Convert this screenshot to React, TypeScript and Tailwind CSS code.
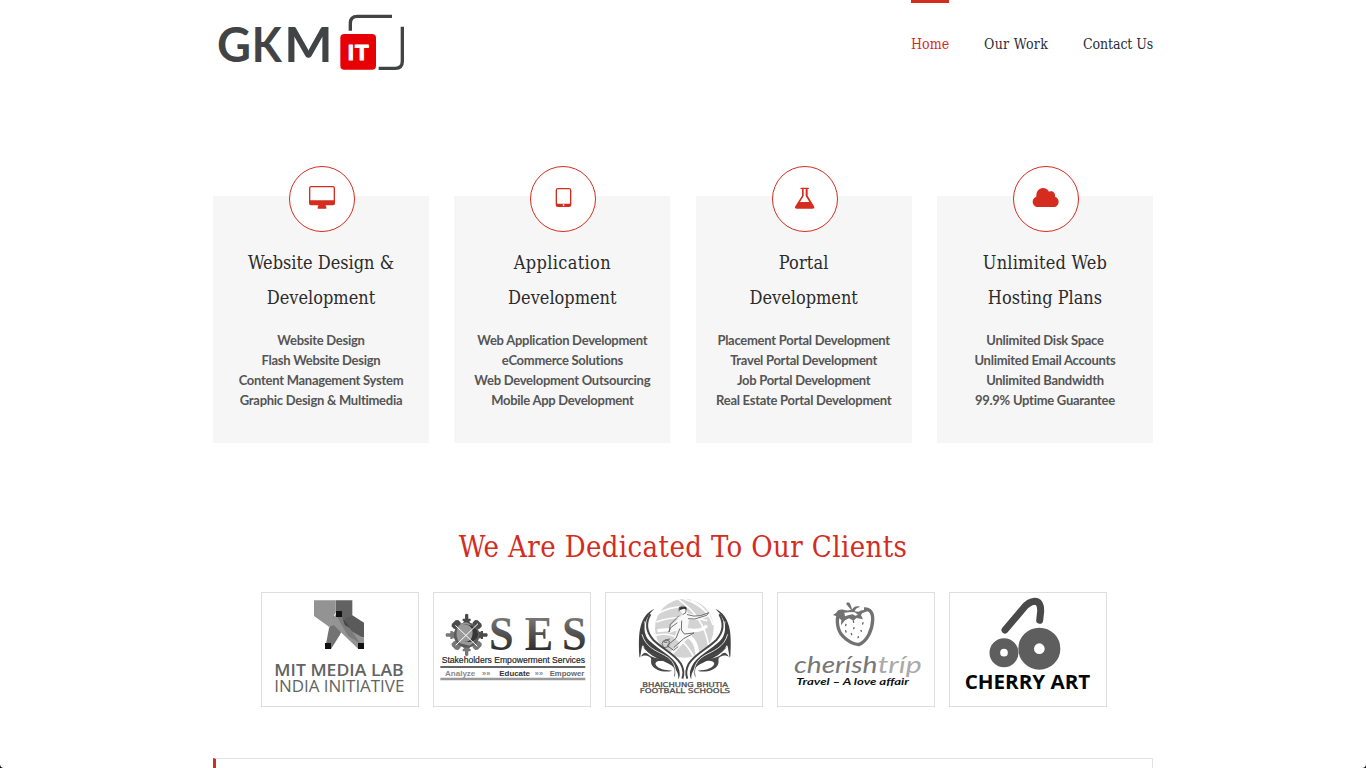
import React from 'react';

const slab = "font-['DejaVu_Serif_Condensed','DejaVu_Serif',serif] [font-stretch:condensed]";

type Service = { title: [string, string]; tracking: string; items: string[]; viewBox: string; icon: React.ReactNode };

const services: Service[] = [
  {
    title: ['Website Design &', 'Development'],
    tracking: 'tracking-[0px]',
    items: ['Website Design', 'Flash Website Design', 'Content Management System', 'Graphic Design & Multimedia'],
    viewBox: '255 36 192 192',
    icon: (
      <path
        fillRule="evenodd"
        d="M318 93h66q6 0 6 6v46q0 6-6 6h-22q0 3 2 5v5h-26v-5q2-2 2-5h-22q-6 0-6-6V99q0-6 6-6Zm0 4q-2 0-2 2v35q0 2 2 2h66q2 0 2-2V99q0-2-2-2Z"
      />
    ),
  },
  {
    title: ['Application', 'Development'],
    tracking: 'tracking-[0.35px]',
    items: ['Web Application Development', 'eCommerce Solutions', 'Web Development Outsourcing', 'Mobile App Development'],
    viewBox: '243 36 192 192',
    icon: (
      <path
        fillRule="evenodd"
        d="M324 99h33q7 0 7 7v43q0 7-7 7h-33q-7 0-7-7v-43q0-7 7-7Zm-1 4q-2 0-2 2v39q0 2 2 2h35q2 0 2-2v-39q0-2-2-2ZM340.500 148a2.500 2.500 0 1 0 .1 0Z"
      />
    ),
  },
  {
    title: ['Portal', 'Development'],
    tracking: 'tracking-[0.15px]',
    items: ['Placement Portal Development', 'Travel Portal Development', 'Job Portal Development', 'Real Estate Portal Development'],
    viewBox: '249 36 192 192',
    icon: (
      <path
        fillRule="evenodd"
        d="M333 98h22q2 0 2 2t-2 2h-2v20l19 32q4 7-5 7h-46q-9 0-5-7l20-32v-20h-3q-2 0-2-2t2-2Zm8 4v21l-11 18h28l-11-18v-21Z"
      />
    ),
  },
  {
    title: ['Unlimited Web', 'Hosting Plans'],
    tracking: 'tracking-[0.2px]',
    items: ['Unlimited Disk Space', 'Unlimited Email Accounts', 'Unlimited Bandwidth', '99.9% Uptime Guarantee'],
    viewBox: '252 36 192 192',
    icon: (
      <path d="M325 156c-10 0-17-7-17-16 0-7 4-13 11-15-1-15 7-26 20-26 8 0 14 4 18 11 9-4 20 2 18 15 7 2 11 8 11 15 0 9-7 16-15 16Z" />
    ),
  },
];

function Logo() {
  return (
    <svg className="block h-[90px] w-[220px]" viewBox="0 0 660 270">
      <g fill="#414344" fontFamily="Lato, sans-serif" fontWeight="700" fontSize="146">
        <text x="36" y="185" textLength="102" lengthAdjust="spacingAndGlyphs">G</text>
        <text x="140" y="185" textLength="90" lengthAdjust="spacingAndGlyphs">K</text>
        <text x="238" y="185" textLength="145" lengthAdjust="spacingAndGlyphs">M</text>
      </g>
      <g fill="none" stroke="#414344" strokeWidth="10">
        <path d="M436 92V70q0-21 21-21h104" />
        <path d="M592 80v104q0 21-21 21h-50" />
      </g>
      <rect x="406" y="102" width="107" height="107" rx="12" fill="#e60005" />
      <g fill="#fff" stroke="#fff" strokeWidth="3" strokeLinejoin="round" fontFamily="'Liberation Sans', sans-serif" fontWeight="700" fontSize="67">
        <text x="428" y="179">I</text>
        <text x="450" y="179">T</text>
      </g>
    </svg>
  );
}

function MitLogo() {
  return (
    <svg className="block h-full w-full" viewBox="21 24 468 339">
      <path d="M242 46h50v48l-18 14-32-22Z" fill="#626262" />
      <path d="m292 91 35 22v45l-38-8-26-45Z" fill="#5a5a5a" />
      <path d="m236 90 26 44-8 17-26 41h-18l12-62Z" fill="#737373" />
      <path d="M177 46h65v35l-20 44-45-32Z" fill="#939393" />
      <path d="m219 125 24-38 35 45 49 28v32h-17l-53-51-20-20Z" fill="#949494" />
      <path d="m243 90 18 6 36 52 20 28-38-24Z" fill="#7b7b7b" />
      <path d="m262 98 24 31-16-8Z" fill="#454545" />
      <path d="M243 78h18v18h-18ZM210 174h18v18h-18ZM309 174h18v18h-18Z" fill="#111" />
      <g fill="#636363" fontFamily="'Open Sans', sans-serif" fontSize="48">
        <text x="58" y="273" fontWeight="600" textLength="388" lengthAdjust="spacingAndGlyphs">MIT MEDIA LAB</text>
        <text x="58" y="322" fontWeight="400" textLength="390" lengthAdjust="spacingAndGlyphs">INDIA INITIATIVE</text>
      </g>
    </svg>
  );
}

function SesLogo() {
  return (
    <svg className="block h-full w-full" viewBox="18 24 468 339">
      <defs>
        <linearGradient id="ses" x1="0" y1="0" x2="0" y2="1">
          <stop offset="0.2" stopColor="#777" />
          <stop offset="1" stopColor="#171717" />
        </linearGradient>
      </defs>
      <g transform="translate(116 150)">
        {[0, 45, 90, 135, 180, 225, 270, 315].map((angle) => (
          <g key={angle} transform={`rotate(${angle})`} fill={angle > 120 && angle < 300 ? '#777' : '#4a4a4a'}>
            {angle % 90 === 0 ? (
              <path d="M-14-28-8-42H-12V-49H-5V-61Q0-66 5-61V-49H12V-42H8L14-28Z" />
            ) : (
              <path d="M-12-28V-39H-14V-50L-8-55H8L14-50V-39H12V-28Z" />
            )}
          </g>
        ))}
        <circle r="38" fill="#5b5b5b" />
        <path d="M-26-25Q-2-49 15-27L30-10Q31 19 9 32L-20 25Q-37 5-26-25Z" fill="#999" />
        <path d="M-12-33Q23-30 17 1 13 26-13 17 26 31 34 0 33-31-12-33Z" fill="#363636" />
        <path d="m-34-29 66 63M34-34l-67 65" stroke="#fff" strokeWidth="3" />
      </g>
      <g fill="url(#ses)" fontFamily="'Liberation Serif', serif" fontWeight="700" fontSize="145">
        <text x="183" y="195" textLength="74" lengthAdjust="spacingAndGlyphs">S</text>
        <text x="290" y="195" textLength="85" lengthAdjust="spacingAndGlyphs">E</text>
        <text x="402" y="195" textLength="74" lengthAdjust="spacingAndGlyphs">S</text>
      </g>
      <g fontFamily="'Liberation Sans', sans-serif">
        <text x="41" y="235" fill="#222" stroke="#222" strokeWidth=".5" fontSize="26" textLength="430" lengthAdjust="spacingAndGlyphs">Stakeholders Empowerment Services</text>
        <path d="M37 246h435" stroke="#333" strokeWidth="5" />
        <g fontSize="22" fontWeight="700">
          <text x="51" y="274" fill="#8a8a8a" textLength="91" lengthAdjust="spacingAndGlyphs">Analyze</text>
          <text x="162" y="273" fill="#888" textLength="25">»»</text>
          <text x="214" y="274" fill="#333" textLength="92" lengthAdjust="spacingAndGlyphs">Educate</text>
          <text x="320" y="273" fill="#888" textLength="25">»»</text>
          <text x="365" y="274" fill="#666" textLength="104" lengthAdjust="spacingAndGlyphs">Empower</text>
        </g>
      </g>
      <path d="M37 282h435" stroke="#999" strokeWidth="8" />
    </svg>
  );
}

function Wing() {
  return (
    <>
      <path d="M163 71C127 105 126 145 150 169c23 23 70 45 84 76 8 18 6 29 1 38 2-24-13-41-35-50-32-14-60-26-71-52l-3 3-6 34-2-4c-2-36-2-68 4-90 6-24 18-42 41-53Z" fill="#414141" />
      <path d="M122 180c13 12 21 25 39 30 18 7 50 12 61 38 4 12 1 21 0 29 15-17-3-50-27-60-27-11-57-20-73-37Z" fill="#4a4a4a" />
      <path d="M122 216c10-17 15-14 24-7 13 11 31 9 50 18-14 2-21-1-27 4-9 7 6 20 24 23l24 3c-20 7-51 1-61-16-7-12 3-21-8-26-9-5-19-5-26 1Z" fill="#484848" />
      <path d="M134 109c3 52 38 68 65 85 27 18 44 43 42 74" fill="none" stroke="#fff" strokeWidth="2.500" />
      <path d="M126 148c11 40 45 50 68 63 25 13 37 36 32 68" fill="none" stroke="#fff" strokeWidth="2.500" />
      <path d="M151 88c-17 30-9 57 9 77 25 25 67 44 83 72 8 15 9 31 4 44" fill="none" stroke="#464646" strokeWidth="6" />
    </>
  );
}

function FootballLogo() {
  return (
    <svg className="block h-full w-full" viewBox="18 24 468 339">
      <circle cx="253" cy="130" r="88" fill="#d3d3d3" />
      <g fill="none" stroke="#fff" strokeWidth="5">
        <path d="M169 111q65-25 153-4M172 87q47-28 95-19M251 42q60 18 84 65M273 45q54 29 66 75M235 43q77 52 91 139M167 151q70-18 113 62" />
        <path d="M172 137q66-7 107-1 26 2 42-14" strokeWidth="10" />
        <path d="M242 152q46-5 51 60" strokeWidth="12" />
      </g>
      <path d="m239 74 9 14-17 17-22 20-1 20 24-11-10 25 18 15-31 29 9 6 45-48 20-15-20-14 4-28 34 1 42-18-9-3-34 9-35-8-10-16Z" fill="#f8f8f8" />
      <g fill="none" stroke="#555" strokeWidth="2.500" strokeLinecap="round">
        <path d="m237 78 1-11q12-8 21 1l-2 16-8 4M236 93l-25 25-4 23 5-13 19-14M262 89q18 7 40 3l24-9-6 8-36 11-19-1M245 108l-1 27 9 12 29-3-31 17-29 26M239 132l-11 28-27 22 20 14 13-11" />
        <path d="m191 167-5 8 5 13 15-3 2-17-12-4-5 7 10 1m-5-6 13-4" />
      </g>
      <path d="m238 67 20-2 2 9-8-3-14 5Z" fill="#333" />
      <Wing />
      <g transform="matrix(-1 0 0 1 509 0)"><Wing /></g>
      <g fill="#4b4b4b" stroke="#4b4b4b" strokeWidth=".8" fontFamily="'DejaVu Sans', sans-serif" fontSize="20">
        <text x="127" y="306" textLength="257" lengthAdjust="spacingAndGlyphs">BHAICHUNG BHUTIA</text>
        <text x="119" y="324" textLength="271" lengthAdjust="spacingAndGlyphs">FOOTBALL SCHOOLS</text>
      </g>
    </svg>
  );
}

function CherishLogo() {
  return (
    <svg className="block h-full w-full" viewBox="18 24 468 339">
      <path d="M201 84c-10 22-4 55 12 70 14 14 30 23 47 25 26-10 41-45 42-74 1-20-6-34-26-33" fill="none" stroke="#727272" strokeWidth="10" strokeLinejoin="round" />
      <path
        fill="#727272"
        d="M193 83c6-11 14-10 24-8 8 2 14 2 20-1l-7-8-8-10 5-4 6 2 5 11 2 9c4-8 12-13 24-9l-12 6-4 8 11 1c8-4 19-9 27-1l-16 6-3 6 6 12-20-4-8 8-14-7-12 6-12 15 1-16c-8-6-12-12-25-15Zm24 0 2 11 9-3 14-3 8 4 8-3-10-7-11-1Z"
        fillRule="evenodd"
      />
      <g fill="none" stroke="#666" strokeWidth="4" strokeLinecap="round">
        <path d="m222 118-1 4M244 108l1 4M273 113l-1 4M246 128l-1 3M267 136l1 3M221 137l1 4M238 145l1 4M259 155l-1 3" />
      </g>
      <g fontFamily="'Lato', sans-serif" fontStyle="italic">
        <text x="66" y="264" fill="#777" fontSize="70" textLength="250" lengthAdjust="spacingAndGlyphs">cherísh</text>
        <text x="317" y="264" fill="#aaa" fontSize="70" textLength="132" lengthAdjust="spacingAndGlyphs">tríp</text>
        <text x="73" y="299" fill="#111" fontSize="27" fontWeight="700" textLength="338" lengthAdjust="spacingAndGlyphs">Travel – A love affair</text>
      </g>
    </svg>
  );
}

function CherryLogo() {
  return (
    <svg className="block h-full w-full" viewBox="18 24 468 339">
      <path d="M183 135 237 71q17-21 35-22 19 0 18 30l-3 27" fill="none" stroke="#494949" strokeWidth="21" strokeLinecap="round" strokeLinejoin="round" />
      <circle cx="180" cy="203" r="27.500" fill="none" stroke="#5e5e5e" strokeWidth="32" />
      <circle cx="286" cy="191" r="39.500" fill="none" stroke="#5e5e5e" strokeWidth="47" />
      <text x="62" y="312" fill="#050505" fontFamily="'Open Sans', sans-serif" fontWeight="700" fontSize="59" textLength="377" lengthAdjust="spacingAndGlyphs">CHERRY ART</text>
    </svg>
  );
}

const clients = [MitLogo, SesLogo, FootballLogo, CherishLogo, CherryLogo];

export default function App() {
  return (
    <div className="relative h-[768px] w-full overflow-hidden bg-white">
      <div className="mx-auto w-[940px]">
        <header className="flex h-[166px] items-start justify-between">
          <div className="-ml-2"><Logo /></div>
          <nav className={`${slab} flex text-[14px] leading-5 text-[#2b2e34]`}>
            <a className="mr-[35px] w-[38px] whitespace-nowrap border-t-[3px] border-[#d42c1f] pt-[31px] tracking-[0.1px] text-[#d42c1f]">Home</a>
            <a className="mr-[34px] w-[65px] whitespace-nowrap pt-[34px] tracking-[0.3px]">Our Work</a>
            <a className="w-[70px] whitespace-nowrap pt-[34px] tracking-[-0.1px]">Contact Us</a>
          </nav>
        </header>

        <section className="flex justify-between">
          {services.map((service) => (
            <article key={service.items[0]} className="flex w-[216px] flex-col items-center">
              <div className="z-10 ml-[2px] h-[66px] w-[66px] rounded-full border border-[#d42c1f] bg-white">
                <svg className="block h-16 w-16" viewBox={service.viewBox} fill="#d42c1f">{service.icon}</svg>
              </div>
              <div className="-mt-9 h-[247px] w-full bg-[#f6f6f6] pt-[49px] text-center">
                <h2 className={`${slab} text-[18px] leading-[35px] text-[#2b2b2b]`}>
                  <span className={service.tracking}>{service.title[0]}</span><br />{service.title[1]}
                </h2>
                <ul className="mt-[15px] whitespace-nowrap font-['Lato',sans-serif] text-[13px] font-bold leading-5 tracking-[-0.27px] text-[#555]">
                  {service.items.map((item) => <li key={item}>{item}</li>)}
                </ul>
              </div>
            </article>
          ))}
        </section>

        <section className="pt-[84px]">
          <h1 className={`${slab} h-10 whitespace-nowrap text-center text-[29px] leading-10 tracking-[0.39px] text-[#d42c1f]`}>We Are Dedicated To Our Clients</h1>
          <div className="mt-[25px] flex justify-center gap-[14px] pl-[2px]">
            {clients.map((Client, index) => (
              <div key={index} className="h-[115px] w-[158px] border border-[#dedede]"><Client /></div>
            ))}
          </div>
        </section>

        <section className="mt-[51px] h-20 border border-l-[3px] border-[#e1e1e1] border-l-[#d42c1f]" />
      </div>
      <svg className="absolute bottom-0 left-0 h-1 w-1" viewBox="0 0 4 4"><path d="M0 0Q0 4 4 4H0Z" /></svg>
      <svg className="absolute bottom-0 right-0 h-1 w-1" viewBox="0 0 4 4"><path d="M4 0Q4 4 0 4h4Z" /></svg>
    </div>
  );
}
